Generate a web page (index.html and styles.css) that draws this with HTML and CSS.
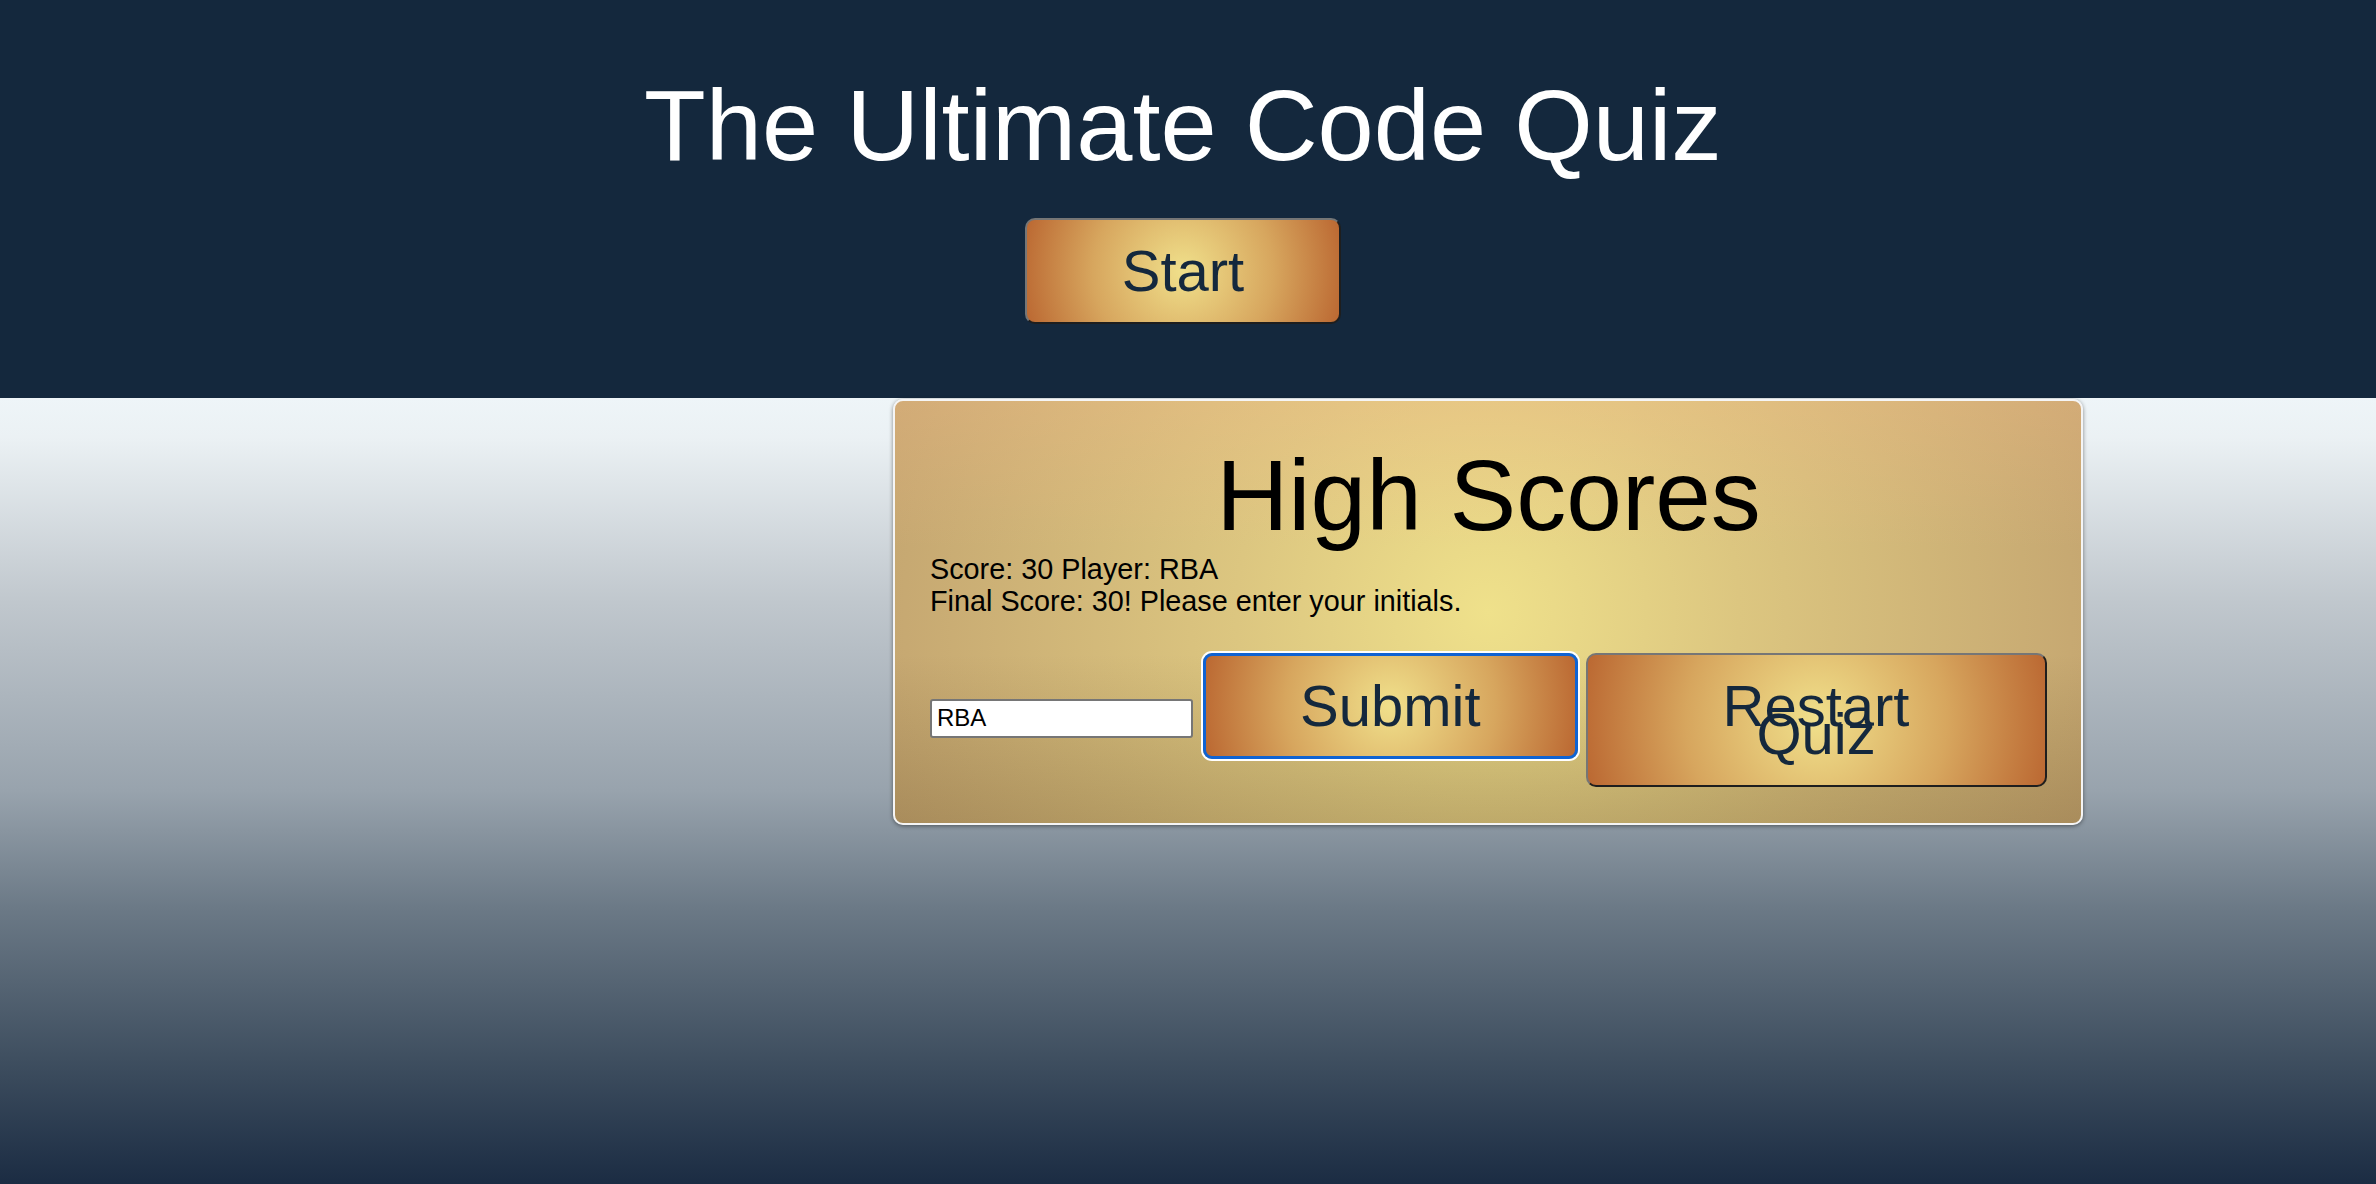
FILE: index.html
```html
<!DOCTYPE html>
<html lang="en">
<head>
<meta charset="utf-8">
<title>The Ultimate Code Quiz</title>
<link rel="stylesheet" href="styles.css">
</head>
<body>
<header class="site-header">
  <h1 class="site-title">The Ultimate Code Quiz</h1>
  <button class="btn btn-start" type="button">Start</button>
</header>
<main class="stage">
  <section class="card">
    <h2 class="card-title">High Scores</h2>
    <p class="line">Score: 30 Player: RBA</p>
    <p class="line">Final Score: 30! Please enter your initials.</p>
    <div class="entry-row">
      <input class="initials" type="text" value="RBA">
      <button class="btn btn-submit" type="button">Submit</button>
      <button class="btn btn-restart" type="button">Restart Quiz</button>
    </div>
  </section>
</main>
</body>
</html>
```
FILE: styles.css
```css
* { box-sizing: border-box; }

html, body {
  margin: 0;
  padding: 0;
}

body {
  width: 2376px;
  height: 1184px;
  overflow: hidden;
  font-family: "Liberation Sans", Arial, sans-serif;
  background: #1b2c43;
}

.site-header {
  height: 398px;
  background: #14283d;
  display: flex;
  flex-direction: column;
  align-items: center;
  padding-top: 68px;
  padding-right: 10px;
}

.site-title {
  margin: 0;
  font-size: 101px;
  line-height: 115px;
  font-weight: normal;
  color: #ffffff;
}

.btn {
  font-family: "Liberation Sans", Arial, sans-serif;
  font-size: 58px;
  line-height: 28px;
  color: #14283d;
  padding: 37px 95px;
  text-align: center;
  border: 2px solid;
  border-color: #767676 #1e1e1e #1e1e1e #767676;
  border-radius: 10px;
  background: radial-gradient(circle, #f0e08b 0%, #d7a65e 55%, #bb6832 100%);
  cursor: pointer;
}

.btn-start {
  margin-top: 35px;
}

.stage {
  height: 786px;
  padding-top: 1px;
  background: linear-gradient(to bottom,
    #eef5f8 0%,
    #ebf1f4 5%,
    #c0c7cd 26%,
    #98a3ad 50%,
    #6b7986 65%,
    #3f4f60 84%,
    #1b2c43 100%);
}

.card {
  margin-left: 893px;
  width: 1190px;
  padding: 37px 34px 36px 35px;
  border: 2px solid #f5f5f5;
  border-radius: 10px;
  box-shadow: 0 1px 4px rgba(0, 0, 0, 0.45);
  background:
    linear-gradient(to bottom,
      rgba(255, 190, 140, 0.25) 0%,
      rgba(255, 190, 140, 0) 35%,
      rgba(60, 40, 10, 0) 60%,
      rgba(60, 40, 10, 0.2) 100%),
    radial-gradient(circle, #efe18b 0%, #dcc680 40%, #c4a570 100%);
  color: #000;
}

.card-title {
  margin: 0;
  font-size: 100px;
  line-height: 115px;
  font-weight: normal;
  text-align: center;
}

.line {
  margin: 0;
  font-size: 28.8px;
  line-height: 32px;
}

.entry-row {
  margin-top: 36px;
  display: flex;
  align-items: baseline;
}

.initials {
  width: 263px;
  height: 39px;
  padding: 0 3px 0 5px;
  font-family: "Liberation Sans", Arial, sans-serif;
  font-size: 24px;
  color: #000;
  background: #fff;
  border: 2px solid #767676;
  border-radius: 3px;
}

.btn-submit {
  margin-left: 10px;
  padding: 36px 94px;
  border: 3px solid #0f63d3;
  border-radius: 9px;
  box-shadow: 0 0 0 2px #ffffff;
}

.btn-restart {
  margin-left: 8px;
  width: 461px;
}
```
